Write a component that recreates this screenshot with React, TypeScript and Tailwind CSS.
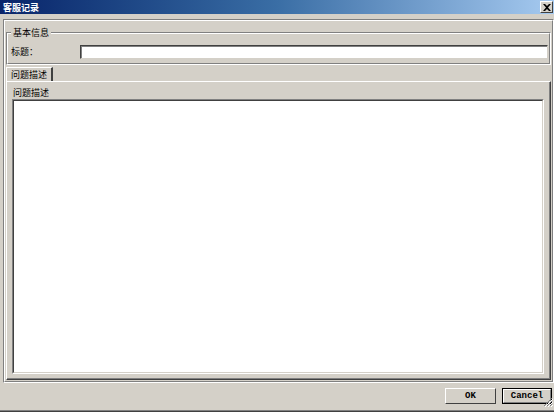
import React from "react";

const font = { fontFamily: '"Noto Sans CJK SC", "Liberation Sans", sans-serif' };

export default function App() {
  return (
    <div
      className="w-[554px] h-[412px] bg-[#d4d0c8] flex flex-col overflow-hidden text-[9px] text-black leading-none"
      style={font}
    >
      {/* title bar */}
      <div className="h-[14px] flex items-center justify-between bg-gradient-to-r from-[#0a246a] via-[#3a6ea5] to-[#a6caf0] pl-[3px] pr-[1px]">
        <span className="text-white font-bold text-[9px] leading-none">客服记录</span>
        <div className="w-[13px] h-[12px] bg-[#d4d0c8] border border-t-white border-l-white border-r-[#404040] border-b-[#404040] flex items-center justify-center">
          <svg width="8" height="7" viewBox="0 0 8 7">
            <path d="M0 0 L2 0 L4 2 L6 0 L8 0 L5 3.5 L8 7 L6 7 L4 5 L2 7 L0 7 L3 3.5 Z" fill="#000" />
          </svg>
        </div>
      </div>

      {/* main panel */}
      <div className="mt-[5px] ml-[3px] h-[364px] border border-t-[#808080] border-l-[#808080] border-r-white border-b-white">
        <div className="h-full border border-t-white border-l-white border-r-[#808080] border-b-[#808080] flex flex-col px-[1px] pt-[11px] pb-[1px]">
          {/* group box */}
          <div className="relative h-[33px] border border-t-[#808080] border-l-[#808080] border-r-white border-b-white">
            <div className="h-full border border-t-white border-l-white border-r-[#808080] border-b-[#808080] flex items-center pl-[3px] pr-[1px] pt-[6px]">
              <span className="w-[69px]">标题：</span>
              <div className="flex-1 h-[14px] bg-white border border-t-[#404040] border-l-[#404040] border-r-[#d4d0c8] border-b-[#d4d0c8] shadow-[inset_1px_1px_0_#808080]" />
            </div>
            <span className="absolute left-[4px] top-[-5px] bg-[#d4d0c8] px-[2px] leading-[10px]">基本信息</span>
          </div>

          {/* tabs */}
          <div className="mt-[2px] flex items-end h-[14px]">
            <div className="h-[14px] pl-[4px] pr-[4px] flex items-center border-t border-l border-t-white border-l-white border-r-2 border-r-[#404040] bg-[#d4d0c8]">
              问题描述
            </div>
          </div>
          <div className="flex-1 border border-t-white border-l-white border-r-[#404040] border-b-[#404040] flex flex-col">
            <div className="flex-1 border-r border-b border-r-[#808080] border-b-[#808080] flex flex-col px-[5px] pt-[6px] pb-[4px]">
              <div className="pl-[1px] h-[11px]">问题描述</div>
              <div className="flex-1 bg-white border border-t-[#808080] border-l-[#808080] border-r-white border-b-white">
                <div className="h-full border border-t-[#404040] border-l-[#404040] border-r-[#d4d0c8] border-b-[#d4d0c8]" />
              </div>
            </div>
          </div>
        </div>
      </div>

      {/* bottom bar */}
      <div className="flex-1 flex items-start justify-end pt-[5px] pr-[2px] gap-[6px] relative">
        <button className="w-[51px] h-[16px] bg-[#d4d0c8] border border-t-white border-l-white border-r-[#404040] border-b-[#404040] text-[9px] font-bold flex items-center justify-center" style={{ fontFamily: '"Liberation Mono", monospace' }}>
          OK
        </button>
        <button className="w-[50px] h-[16px] bg-[#d4d0c8] border border-black flex items-center justify-center text-[9px] font-bold" style={{ fontFamily: '"Liberation Mono", monospace' }}>
          <span className="w-full h-full border border-t-white border-l-white border-r-[#808080] border-b-[#808080] flex items-center justify-center">Cancel</span>
        </button>
        <svg className="absolute right-[1px] bottom-[3px]" width="10" height="10" viewBox="0 0 10 10">
          <path d="M9 1 L1 9 M9 4 L4 9 M9 7 L7 9" stroke="#808080" strokeWidth="1" />
          <path d="M10 2 L2 10 M10 5 L5 10 M10 8 L8 10" stroke="#fff" strokeWidth="1" />
        </svg>
      </div>
      <div className="h-[2px] border-t border-t-[#808080] bg-[#404040]" />
    </div>
  );
}
